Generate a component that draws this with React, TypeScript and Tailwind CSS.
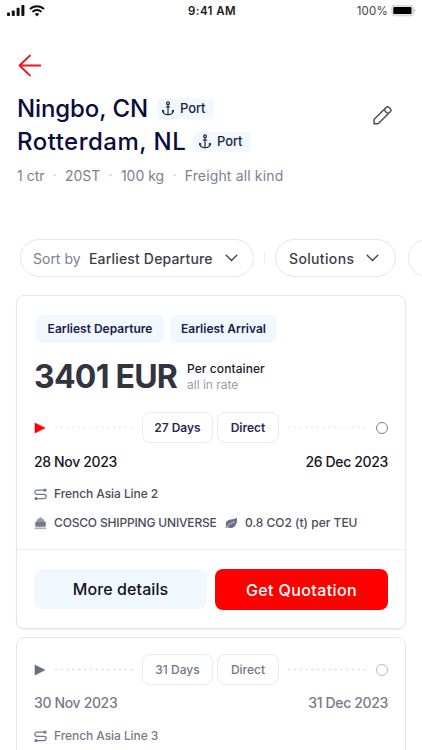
import type { ReactNode } from "react"
import clsx from "clsx"

function SignalIcon() {
  return (
    <svg width="18" height="12" viewBox="0 0 18 12" fill="#111">
      <rect x="0" y="7.500" width="3" height="3.500" rx="0.8" />
      <rect x="4.8" y="5.500" width="3" height="5.500" rx="0.8" />
      <rect x="9.6" y="2.800" width="3" height="8.200" rx="0.8" />
      <rect x="14.4" y="0" width="3" height="11" rx="0.8" />
    </svg>
  )
}

function WifiIcon() {
  return (
    <svg width="16" height="12" viewBox="0 0 16 12" fill="none" stroke="#111" strokeWidth="2">
      <path d="M1 4.1a10 10 0 0 1 14 0" />
      <path d="M3.5 6.9a6.4 6.4 0 0 1 9 0" />
      <path d="M8 11.4 5.7 9.1a3.3 3.3 0 0 1 4.6 0Z" fill="#111" stroke="none" />
    </svg>
  )
}

function BatteryIcon() {
  return (
    <svg width="26" height="12" viewBox="0 0 26 12">
      <rect x="0.8" y="0.2" width="21.5" height="10.6" rx="2.8" fill="#e8e8e8" stroke="#cfcfcf" />
      <rect x="2.3" y="1.9" width="18.2" height="7.2" rx="1.2" fill="#000" />
      <path d="M23.4 3.7c1.4.5 1.4 3.1 0 3.6z" fill="#bbb" />
    </svg>
  )
}

function AnchorIcon() {
  return (
    <svg
      width="12"
      height="15"
      viewBox="0 0 12 15"
      fill="none"
      stroke="#1c1d4b"
      strokeWidth="1.15"
      strokeLinecap="round"
      strokeLinejoin="round"
    >
      <circle cx="6" cy="2.2" r="1.4" />
      <path d="M6 3.700v10M4.200 6h3.600" />
      <path d="M.7 9.500c.3 2.700 2.400 4.200 5.300 4.200s5-1.500 5.300-4.200M.5 10.600l.2-1.300 1.200.7M11.500 10.600l-.2-1.300-1.200.7" />
    </svg>
  )
}

function RouteIcon() {
  return (
    <svg
      width="13"
      height="13"
      viewBox="0 0 13 13"
      fill="none"
      stroke="#74788b"
      strokeWidth="1.2"
      strokeLinecap="round"
      strokeLinejoin="round"
      className="shrink-0"
    >
      <path d="M10 2.200H2.900a2.100 2.100 0 0 0 0 4.200h7.200a2.100 2.100 0 0 1 0 4.200H3" />
      <circle cx="11" cy="2.200" r="1" fill="#74788b" />
      <circle cx="2" cy="10.600" r="1" fill="#74788b" />
    </svg>
  )
}

function ShipIcon() {
  return (
    <svg width="13" height="13" viewBox="0 0 13 13" fill="#74788b" className="shrink-0">
      <path d="M5.300.4h2.400v1.200c1.800.2 2.900 1.400 3 3.300H2.300c.1-1.900 1.200-3.100 3-3.300z" opacity=".75" />
      <path d="M1.200 4.900h10.600v3.600c0 .8-.5 1.300-1.300 1.300h-8c-.8 0-1.300-.5-1.300-1.300z" />
      <path d="M.8 11.300h11.400" fill="none" stroke="#74788b" strokeWidth="1.600" opacity=".6" />
    </svg>
  )
}

function LeafIcon() {
  return (
    <svg width="13" height="12" viewBox="0 0 13 12" className="shrink-0">
      <path
        d="M12 .8c.3 4.100-.3 7-2.600 8.900-1.800 1.500-5 1.700-7.100.5L.9 11.200l-.5-.6.9-1.200C.2 6.900.9 4.400 3.200 3.200 5.700 2 9.400 2.500 12 .8z"
        fill="#697284"
      />
      <path d="M1.400 9.900C4 7.200 6.300 5.900 9.600 4.800" stroke="#fff" strokeWidth=".6" fill="none" />
    </svg>
  )
}

function Chevron() {
  return (
    <svg width="13" height="8" viewBox="0 0 13 8" fill="none" stroke="#3d3e48" strokeWidth="1.3" strokeLinecap="round" strokeLinejoin="round">
      <path d="M1.200 1.200 6.500 6.500l5.300-5.300" />
    </svg>
  )
}

function PortBadge() {
  return (
    <span className="flex h-5 w-[57px] items-center gap-[6px] rounded-[4px] bg-[#f1f8fe] pl-[5px] text-[13px] font-medium tracking-[-0.1px] text-[#1c1d4b]">
      <AnchorIcon />
      Port
    </span>
  )
}

function Tag({ children, className }: { children: ReactNode; className: string }) {
  return (
    <span
      className={clsx(
        "flex h-7 items-center justify-center rounded-md bg-[#f1f8fe] text-[12px] font-semibold text-[#1a1b4b]",
        className
      )}
    >
      {children}
    </span>
  )
}

function Separator() {
  return <span className="mx-px size-[2.500px] rounded-full bg-[#dcdee5]" />
}

function Dots({ muted }: { muted?: boolean }) {
  return (
    <svg width="82" height="3" viewBox="0 0 82 3">
      <line
        x1="1"
        y1="1.5"
        x2="82"
        y2="1.5"
        stroke={muted ? "#dfe1e7" : "#e6e8ef"}
        strokeWidth="1.3"
        strokeDasharray={muted ? "2.4 3.4" : "1.8 4"}
      />
    </svg>
  )
}

type RouteProps = {
  days: string
  from: string
  to: string
  line: string
  muted?: boolean
}

function Route({ days, from, to, line, muted }: RouteProps) {
  const pill = clsx(
    "flex h-[31px] items-center justify-center rounded-lg border border-[#e9eaf3] text-[12px]",
    muted ? "font-medium text-[#74777f]" : "font-semibold text-[#2a2b52]"
  )

  return (
    <>
      <div className="flex h-[31px] items-center">
        <svg width="12" height="12" viewBox="0 0 12 12" fill={muted ? "#667080" : "#ff0000"}>
          <path d="M1 1v10l10-5z" stroke={muted ? "#667080" : "#ff0000"} strokeWidth=".6" strokeLinejoin="round" />
        </svg>
        <div className="ml-2 w-[88px]">
          <Dots muted={muted} />
        </div>
        <span className={clsx(pill, "w-[71px]")}>{days}</span>
        <span className={clsx(pill, "ml-1 w-[62px]")}>Direct</span>
        <div className="ml-2 flex flex-1 items-center justify-between">
          <Dots muted={muted} />
          <span
            className={clsx(
              "size-3 rounded-full border-[1.3px]",
              muted ? "border-[#b7bac0]" : "border-[#7d7f86]"
            )}
          />
        </div>
      </div>
      <div
        className={clsx(
          "flex h-5 items-center justify-between text-[14px] font-medium tracking-[-0.35px]",
          muted ? "mt-[7px] mb-[14px] text-[#777a87]" : "mt-2 mb-[13px] text-[#15151b]"
        )}
      >
        <span>{from}</span>
        <span>{to}</span>
      </div>
      <div
        className={clsx(
          "flex h-5 items-center gap-[7px] text-[12px] font-medium tracking-[-0.07px]",
          muted ? "text-[#777a87]" : "text-[#4b4c59]"
        )}
      >
        <RouteIcon />
        {line}
      </div>
    </>
  )
}

export default function App() {
  return (
    <div className="h-[750px] w-[422px] overflow-hidden bg-white font-['Inter',sans-serif] whitespace-nowrap">
      <div className="grid h-[22px] grid-cols-3 items-center pr-[5px] pl-[7px] text-[11.5px] text-[#1b1b1b]">
        <div className="flex items-center gap-1">
          <SignalIcon />
          <WifiIcon />
        </div>
        <span className="pt-px text-center font-semibold tracking-[0.4px]">9:41 AM</span>
        <div className="flex items-center justify-end gap-[3px] text-[#444]">
          <span className="pt-px tracking-[0.2px]">100%</span>
          <BatteryIcon />
        </div>
      </div>

      <header className="flex h-[217px] justify-between pl-[17px] pr-[29px]">
        <div className="pt-8">
          <svg width="25" height="24" viewBox="0 0 25 24" fill="none" stroke="#ee1420" strokeWidth="1.8" strokeLinecap="round" strokeLinejoin="round">
            <path d="M23.300 11.500H2.500M13 1.500 2.500 11.500 13 21.500" />
          </svg>
          <h1 className="mt-[14px] text-[24px] leading-[33px] font-medium text-[#0b0c3c]">
            <span className="flex items-center">
              <span className="w-[140px] tracking-[-0.1px]">Ningbo, CN</span>
              <PortBadge />
            </span>
            <span className="flex items-center">
              <span className="w-[177px] tracking-[0.48px]">Rotterdam, NL</span>
              <PortBadge />
            </span>
          </h1>
          <div className="mt-[7px] flex h-5 items-center gap-[8px] text-[14px] text-[#7d8090]">
            <span>1 ctr</span>
            <Separator />
            <span>20ST</span>
            <Separator />
            <span>100 kg</span>
            <Separator />
            <span className="tracking-[0.15px]">Freight all kind</span>
          </div>
        </div>
        <svg width="21" height="21" viewBox="0 0 21 21" fill="none" stroke="#474747" strokeWidth="1.4" strokeLinejoin="round" className="mt-[83px]">
          <path d="M2 18.200v-2.900c0-.5.2-.9.5-1.200L14.300 2.300c.7-.7 1.800-.7 2.500 0l1.700 1.700c.7.7.7 1.800 0 2.500L6.700 18.300c-.3.3-.7.5-1.200.5H2.600c-.4 0-.6-.2-.6-.6zM12.600 4c.2 2.400 1.700 4 4.200 4.200" />
        </svg>
      </header>

      <div className="flex h-[38px] items-center pl-[20px] text-[14px] font-medium text-[#3d3e48]">
        <div className="flex h-full w-[234px] shrink-0 items-center rounded-full border border-[#e5e5ef] pl-[12px]">
          <span className="w-[56px] font-normal text-[#7d8090]">Sort by</span>
          <span className="w-[136px] tracking-[0.17px]">Earliest Departure</span>
          <Chevron />
        </div>
        <span className="mx-[10px] h-3 w-px shrink-0 bg-[#ededf3]" />
        <div className="flex h-full w-[121px] shrink-0 items-center rounded-full border border-[#e5e5ef] pl-[13px]">
          <span className="w-[77px] tracking-[0.35px]">Solutions</span>
          <Chevron />
        </div>
        <div className="ml-3 h-full w-[121px] shrink-0 rounded-full border border-[#e5e5ef]" />
      </div>

      <main className="mt-[18px] flex flex-col gap-2 pr-[16px] pl-[16px]">
        <section className="h-[334px] shrink-0 rounded-lg border border-[#e5e5f1] shadow-[0_1px_1px_#ececf5]">
          <div className="px-[17px]">
            <div className="flex gap-[6px] pt-[19px] pl-[2px]">
              <Tag className="w-[128px]">Earliest Departure</Tag>
              <Tag className="w-[107px]">Earliest Arrival</Tag>
            </div>
            <div className="mt-[16px] flex h-9 items-center">
              <span className="w-[153px] text-[32px] font-bold tracking-[-0.75px] text-[#32343f]">3401 EUR</span>
              <div className="-mt-px text-[12px] leading-4">
                <div className="font-medium tracking-[0.08px] text-[#202027]">Per container</div>
                <div className="text-[#9b9da8]">all in rate</div>
              </div>
            </div>
            <div className="mt-[17px]">
              <Route days="27 Days" from="28 Nov 2023" to="26 Dec 2023" line="French Asia Line 2" />
            </div>
            <div className="mt-[9px] flex h-5 items-center text-[12px] font-medium text-[#4b4c59]">
              <ShipIcon />
              <span className="ml-[7px] w-[171px] tracking-[-0.17px]">COSCO SHIPPING UNIVERSE</span>
              <LeafIcon />
              <span className="ml-[7px]">0.8 CO2 (t) per TEU</span>
            </div>
          </div>
          <div className="mt-[16px] flex gap-2 border-t border-[#ededf5] px-[17px] pt-[19px] text-[16px] font-medium">
            <button className="h-10 w-[173px] rounded-lg bg-[#f1f8fe] tracking-[0.1px] text-[#11121b]">More details</button>
            <button className="h-[41px] flex-1 rounded-lg bg-[#ff0000] tracking-[0.38px] text-white">Get Quotation</button>
          </div>
        </section>

        <section className="h-[334px] shrink-0 rounded-lg border border-[#e5e5f1] px-[17px] pt-[16px]">
          <Route days="31 Days" from="30 Nov 2023" to="31 Dec 2023" line="French Asia Line 3" muted />
        </section>
      </main>
    </div>
  )
}
